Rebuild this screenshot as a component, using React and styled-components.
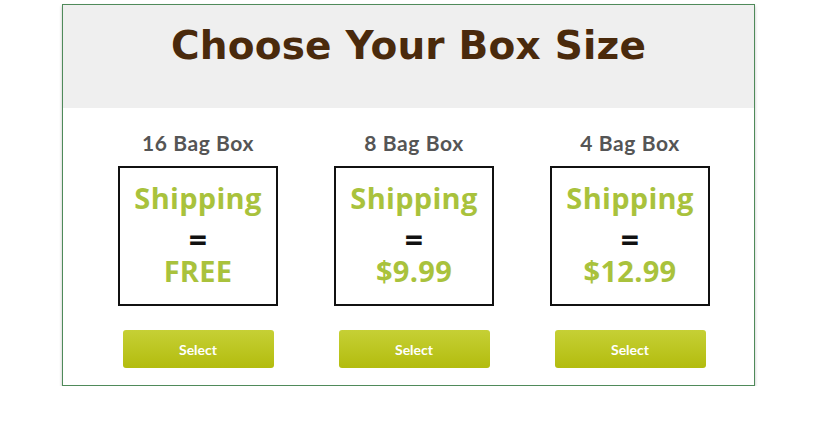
import styled, { createGlobalStyle } from 'styled-components'

const Global = createGlobalStyle`
  body {
    margin: 0;
    background: #fff;
    font-family: 'Open Sans', 'Liberation Sans', sans-serif;
  }
`

const Card = styled.div`
  width: 691px;
  margin: 4px 0 0 62px;
  border: 1px solid #4f8a5a;
  background: #fff;
  box-shadow: 0 2px 3px rgba(0, 0, 0, .25);
`

const Header = styled.div`
  background: #efefef;
  height: 103px;
  display: flex;
  align-items: center;
  justify-content: center;
`

const Title = styled.h1`
  margin: 0 0 22px 0;
  font-family: 'DejaVu Sans', sans-serif;
  font-weight: 700;
  font-size: 39px;
  letter-spacing: 0.2px;
  color: #4a2a0c;
`

const Row = styled.div`
  display: flex;
  padding: 20px 15px 17px 27px;
`

const Column = styled.div`
  width: 216px;
  display: flex;
  flex-direction: column;
  align-items: center;
`

const Name = styled.div`
  font-family: 'Lato', sans-serif;
  font-weight: 700;
  font-size: 21px;
  letter-spacing: 0.6px;
  color: #555;
  line-height: 30px;
  margin-bottom: 8px;
`

const Box = styled.div`
  box-sizing: border-box;
  width: 160px;
  height: 140px;
  border: 2px solid #111;
  display: flex;
  flex-direction: column;
  align-items: center;
  padding-top: 14px;
`

const Line = styled.div`
  font-family: 'Open Sans', sans-serif;
  font-weight: 700;
  font-size: 29px;
  letter-spacing: 0.3px;
  line-height: 32px;
  color: #a9c23c;
`

const Equals = styled.div`
  font-family: 'Open Sans', sans-serif;
  font-weight: 700;
  font-size: 32px;
  line-height: 30px;
  margin-top: 11px;
  color: #111;
`

const Button = styled.button`
  margin-top: 24px;
  width: 151px;
  height: 38px;
  border: 0;
  border-radius: 3px;
  background: linear-gradient(#c6d035, #b3bc0e);
  color: #fff;
  font-family: 'Lato', sans-serif;
  font-weight: 700;
  font-size: 14px;
  cursor: pointer;
`

const boxes = [
  { name: '16 Bag Box', price: 'FREE' },
  { name: '8 Bag Box', price: '$9.99' },
  { name: '4 Bag Box', price: '$12.99' },
]

export default () =>
  <>
    <Global />
    <Card>
      <Header>
        <Title children='Choose Your Box Size' />
      </Header>
      <Row>
        {boxes.map(b =>
          <Column key={b.name}>
            <Name children={b.name} />
            <Box>
              <Line children='Shipping' />
              <Equals children='=' />
              <Line children={b.price} />
            </Box>
            <Button children='Select' />
          </Column>
        )}
      </Row>
    </Card>
  </>
